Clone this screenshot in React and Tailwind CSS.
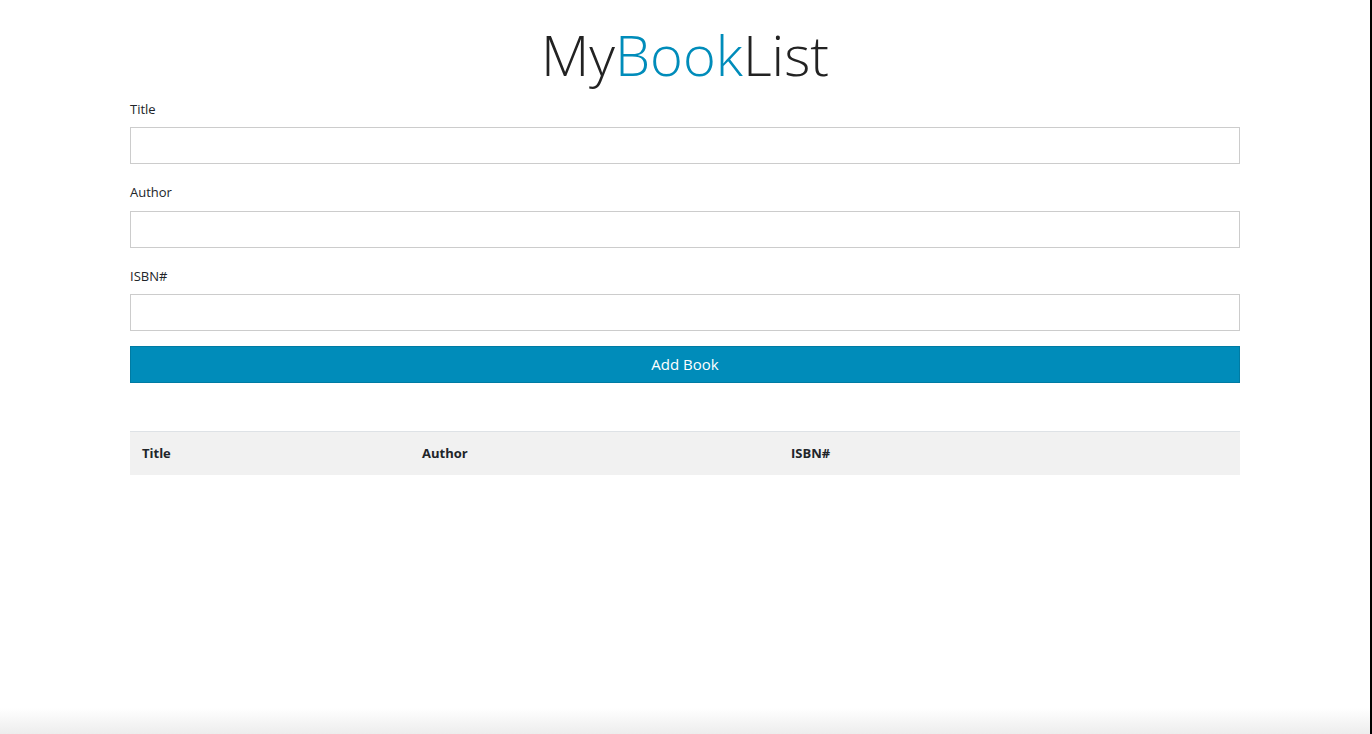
export default function App() {
  const font = { fontFamily: '"Open Sans", "Noto Sans", sans-serif' };
  return (
    <div className="flex h-screen w-full bg-white text-[#212529]" style={font}>
      <div className="flex flex-1 flex-col">
        <div className="mx-auto w-[1110px] flex-1">
          <h1 className="mt-[16px] h-[76px] text-center text-[56px] font-light leading-[76px] text-[#222]">
            My<span className="text-[#008cba]">Book</span>List
          </h1>
          <form className="mt-[7.5px]">
            {["Title", "Author", "ISBN#"].map((l, i) => (
              <div key={l} className={i < 2 ? "mb-[19px]" : "mb-[15px]"}>
                <label className="mb-[9.5px] block h-[18px] text-[13px] leading-[18px]">{l}</label>
                <input
                  type="text"
                  className="block h-[37px] w-full border border-[#cccccc] bg-white px-2 text-[14px] outline-none"
                />
              </div>
            ))}
            <button
              type="button"
              className="block h-[37px] w-full border border-[#007ba3] bg-[#008cba] text-[15px] font-normal text-white"
            >
              Add Book
            </button>
          </form>
          <table className="mt-[48px] w-full border-collapse text-[13px]">
            <thead>
              <tr className="h-[43px] border-t border-[#dee2e6] bg-[#f1f1f1] text-left font-bold">
                <th className="w-[280px] px-3 font-bold">Title</th>
                <th className="w-[369px] px-3 font-bold">Author</th>
                <th className="px-3 font-bold">ISBN#</th>
              </tr>
            </thead>
          </table>
        </div>
        <div className="h-[26px] bg-gradient-to-b from-white to-[#ededed]" />
      </div>
      <div className="w-[2px] bg-black" />
    </div>
  );
}
